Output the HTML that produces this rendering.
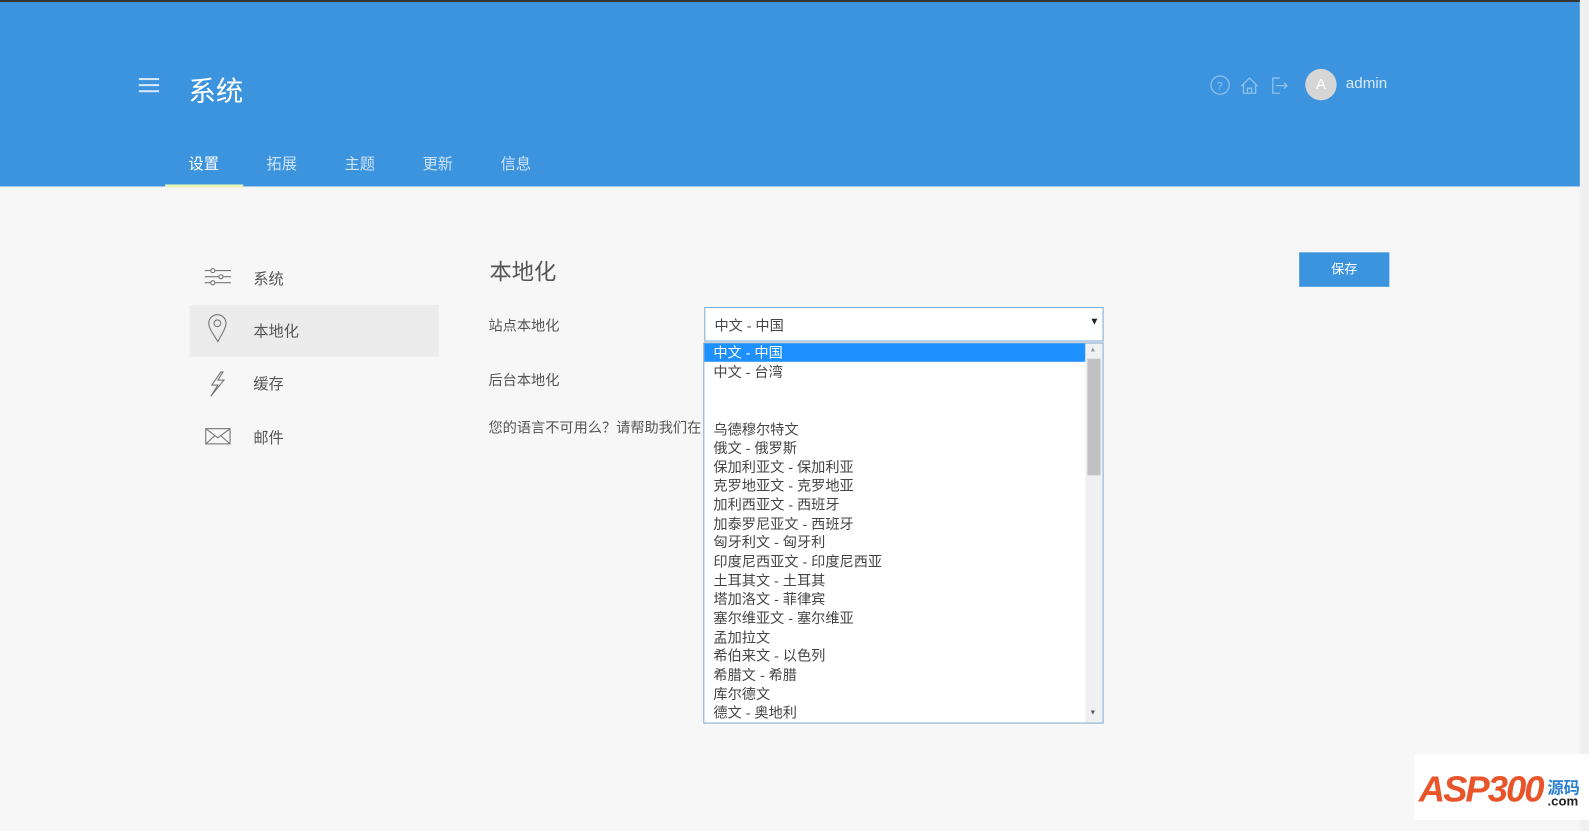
<!DOCTYPE html>
<html><head><meta charset="utf-8"><style>
*{margin:0;padding:0;box-sizing:border-box}
html,body{width:1589px;height:809px;overflow:hidden;background:#f7f7f7}
#w{position:absolute;left:0;top:0;width:1568px;height:798px;transform:scale(1.0134);transform-origin:0 0;font-family:"Liberation Sans","Noto Sans CJK SC",sans-serif;color:#555}
.top{position:absolute;left:0;top:0;width:1559px;height:184px;background:#3c94df}
.topline{position:absolute;left:0;top:0;width:1589px;height:2px;background:#333}
.sb{position:absolute;left:1559px;top:0;width:40px;height:820px;background:#f0f0f0}
.abs{position:absolute}
.tab{position:absolute;top:151px;font-size:15px;color:#cfe3f6}
.menu{position:absolute;left:250px;font-size:15px;color:#555}
.opt{position:absolute;left:704px;font-size:14px;color:#444;line-height:18px}
</style></head><body><div id="w">
<div class="top"></div><div class="topline"></div><div class="sb"></div>
<div class="abs" style="left:137px;top:77px;width:20px;height:2px;background:#d8e9f8;box-shadow:0 6px 0 #d8e9f8,0 12px 0 #d8e9f8"></div>
<div class="abs" style="left:186px;top:68px;font-size:27px;color:#fff">系统</div>
<div class="tab" style="left:186px;color:#fff">设置</div>
<div class="tab" style="left:263px">拓展</div>
<div class="tab" style="left:340px">主题</div>
<div class="tab" style="left:417px">更新</div>
<div class="tab" style="left:494px">信息</div>
<div class="abs" style="left:163px;top:182px;width:77px;height:3px;background:#e8f7b8"></div>
<svg class="abs" style="left:1192px;top:72px" width="90" height="24" fill="none" stroke="#8ec0ec" stroke-width="1.3">
<circle cx="12" cy="12" r="9"/><text x="8.5" y="16.5" font-size="11" fill="#8ec0ec" stroke="none" font-family="Liberation Sans">?</text>
<path d="M33 13 L41 5 L49 13 M35 11 V20 H47 V11 M39 20 V15 H43 V20"/>
<path d="M71 5 H64 V20 H71 M67 12.5 H78 M75 9.5 L78 12.5 L75 15.5"/>
</svg>
<div class="abs" style="left:1288px;top:68px;width:31px;height:31px;border-radius:50%;background:#d6d6d6;color:#fff;font-size:15px;text-align:center;line-height:31px">A</div>
<div class="abs" style="left:1328px;top:74px;font-size:15px;color:#d8e9f8">admin</div>

<div class="abs" style="left:187px;top:301px;width:246px;height:51px;background:#ececec"></div>
<svg class="abs" style="left:200px;top:260px" width="32" height="190" fill="none" stroke="#777" stroke-width="1.1">
<path d="M2 7 H28 M2 13 H28 M2 19 H28"/><circle cx="10" cy="7" r="2" fill="#f7f7f7"/><circle cx="18" cy="13" r="2" fill="#f7f7f7"/><circle cx="10" cy="19" r="2" fill="#f7f7f7"/>
<path d="M15 77 C8 66 6 63 6 59 A8.5 8.5 0 0 1 23 59 C23 63 21 66 15 77 Z"/><circle cx="14.5" cy="59" r="3.3"/>
<path d="M18 107 L9 120 H15 L8 131 L21 115 H15 L20 107 Z"/>
<rect x="3" y="163" width="24" height="15"/><path d="M3 163 L15 172 L27 163 M3 178 L12 170 M27 178 L18 170"/>
</svg>
<div class="menu" style="top:264px">系统</div>
<div class="menu" style="top:316px">本地化</div>
<div class="menu" style="top:368px">缓存</div>
<div class="menu" style="top:421px">邮件</div>

<div class="abs" style="left:483px;top:251px;font-size:22px;color:#555">本地化</div>
<div class="abs" style="left:1282px;top:249px;width:89px;height:34px;background:#3c94df;color:#fff;font-size:13px;text-align:center;line-height:34px">保存</div>
<div class="abs" style="left:482px;top:311px;font-size:14px">站点本地化</div>
<div class="abs" style="left:482px;top:365px;font-size:14px">后台本地化</div>
<div class="abs" style="left:482px;top:412px;font-size:14px">您的语言不可用么？请帮助我们在</div>

<div class="abs" style="left:695px;top:303px;width:394px;height:34px;background:#fff;border:1px solid #7aa7d0"></div>
<div class="abs" style="left:705px;top:311px;font-size:14px;color:#444">中文 - 中国</div>
<div class="abs" style="left:1075px;top:312px;font-size:10px;color:#222">▼</div>

<div class="abs" style="left:694px;top:338px;width:395px;height:376px;background:#fff;border:1px solid #7aa7d0"></div>
<div class="abs" style="left:695px;top:339px;width:376px;height:18px;background:#1e90ff"></div>
<div class="abs" style="left:1071px;top:339px;width:17px;height:374px;background:#f0f0f0"></div>
<div class="abs" style="left:1073px;top:354px;width:13px;height:115px;background:#c1c1c1"></div>
<div class="abs" style="left:1075px;top:342px;font-size:7px;color:#999">▲</div>
<div class="abs" style="left:1075px;top:700px;font-size:7px;color:#555">▼</div>
<div class="opt" style="top:339px;color:#fff">中文 - 中国</div>
<div class="opt" style="top:358px">中文 - 台湾</div>
<div class="opt" style="top:415px">乌德穆尔特文</div>
<div class="opt" style="top:433px">俄文 - 俄罗斯</div>
<div class="opt" style="top:452px">保加利亚文 - 保加利亚</div>
<div class="opt" style="top:470px">克罗地亚文 - 克罗地亚</div>
<div class="opt" style="top:489px">加利西亚文 - 西班牙</div>
<div class="opt" style="top:508px">加泰罗尼亚文 - 西班牙</div>
<div class="opt" style="top:526px">匈牙利文 - 匈牙利</div>
<div class="opt" style="top:545px">印度尼西亚文 - 印度尼西亚</div>
<div class="opt" style="top:564px">土耳其文 - 土耳其</div>
<div class="opt" style="top:582px">塔加洛文 - 菲律宾</div>
<div class="opt" style="top:601px">塞尔维亚文 - 塞尔维亚</div>
<div class="opt" style="top:620px">孟加拉文</div>
<div class="opt" style="top:638px">希伯来文 - 以色列</div>
<div class="opt" style="top:657px">希腊文 - 希腊</div>
<div class="opt" style="top:676px">库尔德文</div>
<div class="opt" style="top:694px">德文 - 奥地利</div>

<div class="abs" style="left:1396px;top:744px;width:193px;height:65px;background:#fff"></div>
<div class="abs" style="left:1400px;top:758px;font-size:36px;font-weight:bold;font-style:italic;color:#e8552a;letter-spacing:-2px">ASP300</div>
<div class="abs" style="left:1527px;top:764px;font-size:16px;font-weight:bold;color:#2a7fd0">源码</div>
<div class="abs" style="left:1527px;top:783px;font-size:13px;font-weight:bold;color:#222">.com</div>
</div></body></html>
